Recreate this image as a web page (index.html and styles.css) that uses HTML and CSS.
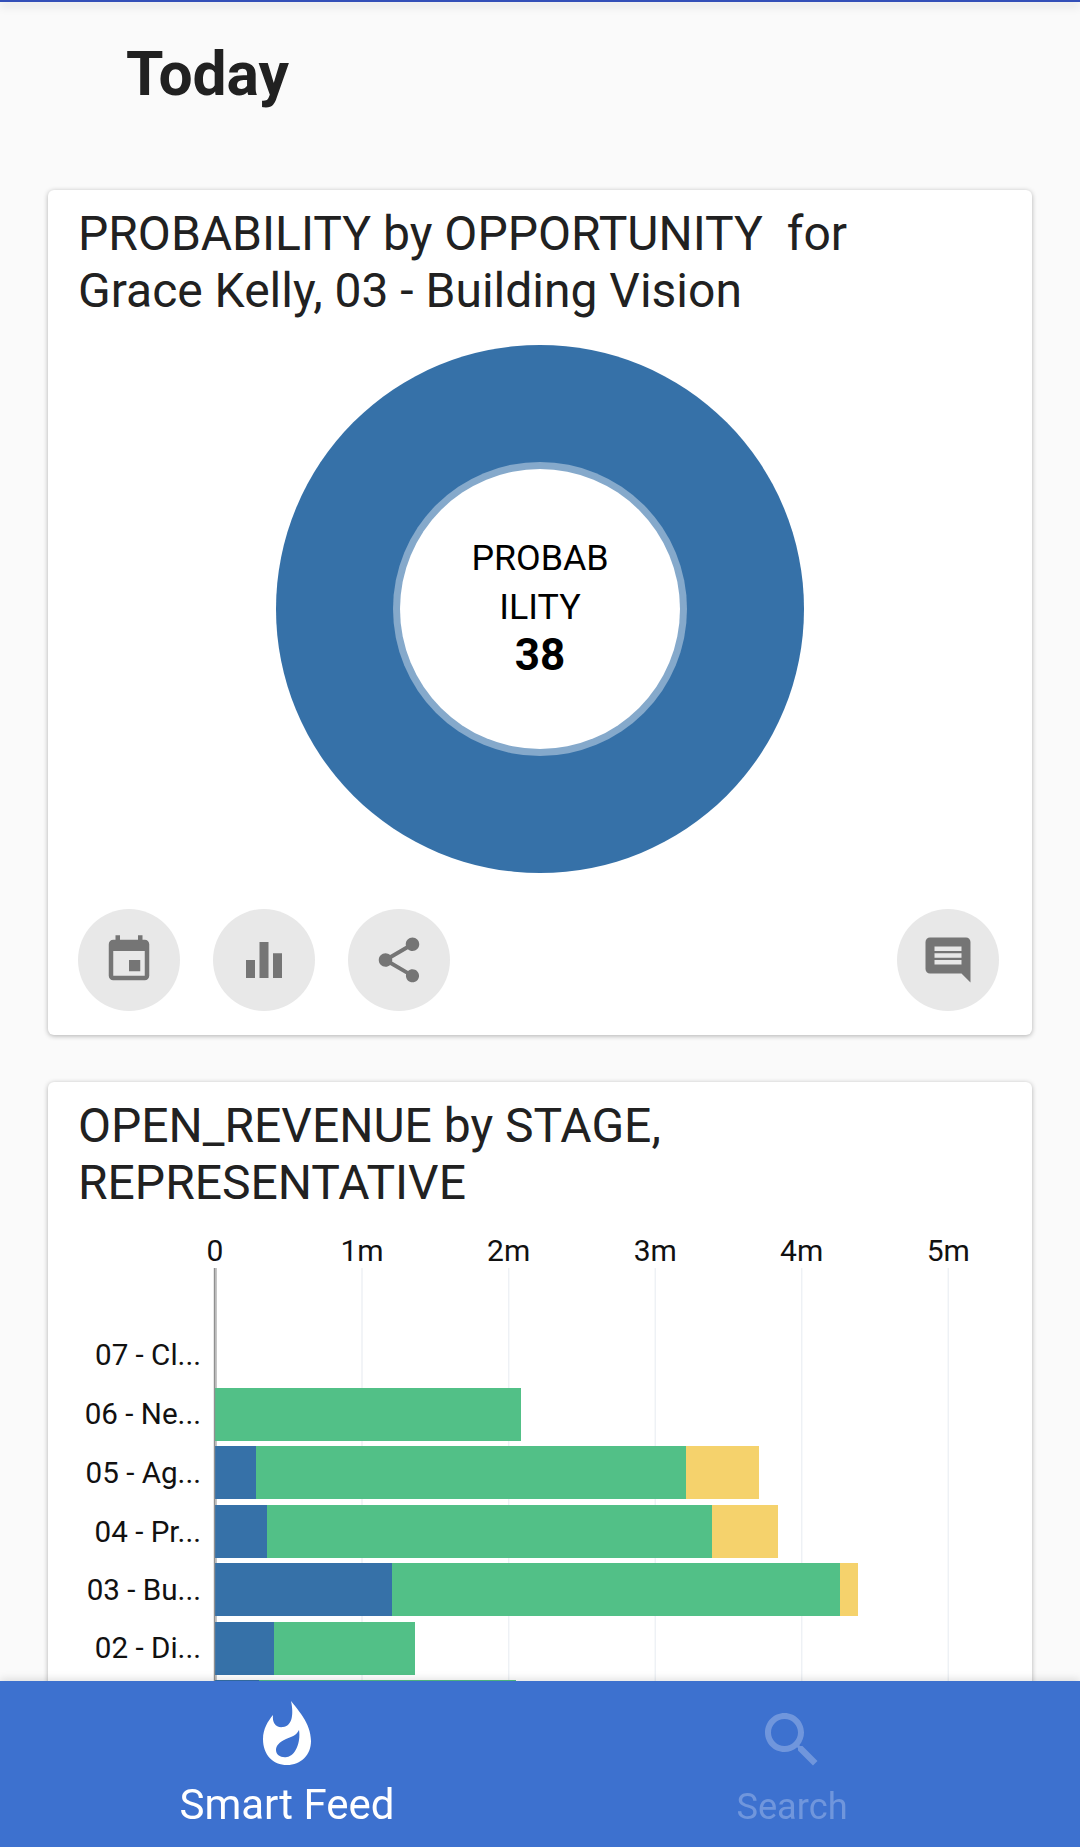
FILE: index.html
```html
<!DOCTYPE html>
<html lang="en">
<head>
    <meta charset="UTF-8">
    <meta name="viewport" content="width=device-width, initial-scale=1.0">
    <title>Smart Feed</title>
    <link rel="stylesheet" href="styles.css">
</head>
<body>
    <div class="top-bar"></div>
    <h1 class="page-title">Today</h1>

    <div class="card">
        <h2 class="card-title">PROBABILITY by OPPORTUNITY &nbsp;for Grace Kelly, 03 - Building Vision</h2>
        <svg class="donut" viewBox="0 0 528 528" width="528" height="528">
            <circle class="donut-slice" cx="264" cy="264" r="264"></circle>
            <circle class="donut-ring" cx="264" cy="264" r="147"></circle>
            <circle class="donut-hole" cx="264" cy="264" r="140"></circle>
            <text class="donut-label" x="264" y="225">PROBAB</text>
            <text class="donut-label" x="264" y="274">ILITY</text>
            <text class="donut-value" x="264" y="325">38</text>
        </svg>
        <div class="card-actions">
            <div class="action-group">
                <div class="action">
                    <svg viewBox="0 0 24 24" width="54" height="54"><path d="M17 12h-5v5h5v-5zM16 1v2H8V1H6v2H5c-1.11 0-1.99.9-1.99 2L3 19c0 1.1.89 2 2 2h14c1.1 0 2-.9 2-2V5c0-1.1-.9-2-2-2h-1V1h-2zm3 18H5V8h14v11z"/></svg>
                </div>
                <div class="action">
                    <svg viewBox="0 0 24 24" width="54" height="54"><path d="M4 12h4v8H4zM10 4h4v16h-4zM16 9h4v11h-4z"/></svg>
                </div>
                <div class="action">
                    <svg viewBox="0 0 24 24" width="54" height="54"><path d="M18 16.08c-.76 0-1.44.3-1.96.77L8.91 12.7c.05-.23.09-.46.09-.7s-.04-.47-.09-.7l7.05-4.11c.54.5 1.25.81 2.04.81 1.66 0 3-1.34 3-3s-1.34-3-3-3-3 1.34-3 3c0 .24.04.47.09.7L8.04 9.81C7.5 9.31 6.79 9 6 9c-1.66 0-3 1.34-3 3s1.34 3 3 3c.79 0 1.5-.31 2.04-.81l7.12 4.16c-.05.21-.08.43-.08.65 0 1.61 1.31 2.92 2.92 2.92 1.61 0 2.92-1.31 2.92-2.92s-1.31-2.92-2.92-2.92z"/></svg>
                </div>
            </div>
            <div class="action">
                <svg viewBox="0 0 24 24" width="54" height="54"><path d="M21.99 4c0-1.1-.89-2-1.99-2H4c-1.1 0-2 .9-2 2v12c0 1.1.9 2 2 2h14l4 4-.01-18zM18 14H6v-2h12v2zm0-3H6V9h12v2zm0-3H6V6h12v2z"/></svg>
            </div>
        </div>
    </div>

    <div class="card">
        <h2 class="card-title">OPEN_REVENUE by STAGE, REPRESENTATIVE</h2>
        <svg class="bar-chart" viewBox="1 0 984 530" width="984" height="530">
            <line class="grid" x1="315" x2="315" y1="56" y2="530"></line>
            <line class="grid" x1="461.7" x2="461.7" y1="56" y2="530"></line>
            <line class="grid" x1="608.3" x2="608.3" y1="56" y2="530"></line>
            <line class="grid" x1="754.7" x2="754.7" y1="56" y2="530"></line>
            <line class="grid" x1="901.3" x2="901.3" y1="56" y2="530"></line>
            <line class="grid-zero" x1="169" x2="169" y1="56" y2="530"></line>

            <text class="tick" x="168" y="49">0</text>
            <text class="tick" x="315" y="49">1m</text>
            <text class="tick" x="461.7" y="49">2m</text>
            <text class="tick" x="608.3" y="49">3m</text>
            <text class="tick" x="754.7" y="49">4m</text>
            <text class="tick" x="901.3" y="49">5m</text>

            <text class="stage" x="154" y="153">07 - Cl...</text>
            <text class="stage" x="154" y="212">06 - Ne...</text>
            <text class="stage" x="154" y="271">05 - Ag...</text>
            <text class="stage" x="154" y="330">04 - Pr...</text>
            <text class="stage" x="154" y="388">03 - Bu...</text>
            <text class="stage" x="154" y="446">02 - Di...</text>

            <rect class="bar-green" x="168" y="176" width="306" height="53"></rect>

            <rect class="bar-blue" x="168" y="234" width="41" height="53"></rect>
            <rect class="bar-green" x="209" y="234" width="430" height="53"></rect>
            <rect class="bar-yellow" x="639" y="234" width="73" height="53"></rect>

            <rect class="bar-blue" x="168" y="293" width="52" height="53"></rect>
            <rect class="bar-green" x="220" y="293" width="445" height="53"></rect>
            <rect class="bar-yellow" x="665" y="293" width="66" height="53"></rect>

            <rect class="bar-blue" x="168" y="351" width="177" height="53"></rect>
            <rect class="bar-green" x="345" y="351" width="448" height="53"></rect>
            <rect class="bar-yellow" x="793" y="351" width="18" height="53"></rect>

            <rect class="bar-blue" x="168" y="410" width="59" height="53"></rect>
            <rect class="bar-green" x="227" y="410" width="141" height="53"></rect>

            <rect class="bar-blue" x="168" y="468" width="44" height="53"></rect>
            <rect class="bar-green" x="212" y="468" width="257" height="53"></rect>

            <line class="axis" x1="167.5" x2="167.5" y1="56" y2="530"></line>
        </svg>
    </div>

    <nav class="bottom-nav">
        <div class="nav-item active">
            <svg class="nav-flame" viewBox="0 0 48 64" width="48" height="64">
                <path fill-rule="evenodd" d="M28 0C34 8 48 22 48 40C48 54 38 64 24 64C10 64 0 54 0 38C0 28 5 20 10 14C9 22 13 27 20 26C29 25 31 14 28 0ZM36 29C33 35 28 36 23 38C16 41 13 45 13 49C13 54 18 57 24 56C32 55 38 42 36 29Z"/>
            </svg>
            <span class="nav-label">Smart Feed</span>
        </div>
        <div class="nav-item">
            <svg class="nav-search" viewBox="0 0 24 24" width="72" height="72">
                <path d="M15.5 14h-.79l-.28-.27C15.41 12.59 16 11.11 16 9.5 16 5.91 13.09 3 9.5 3S3 5.91 3 9.5 5.91 16 9.5 16c1.61 0 3.09-.59 4.23-1.57l.27.28v.79l5 4.99L20.49 19l-4.99-5zm-6 0C7.01 14 5 11.99 5 9.5S7.01 5 9.5 5 14 7.01 14 9.5 11.99 14 9.5 14z"/>
            </svg>
            <span class="nav-label">Search</span>
        </div>
    </nav>
</body>
</html>
```

FILE: styles.css
```css
html, body {
    height: 100%;
}
body {
    font-family: Roboto, "Liberation Sans", sans-serif;
    margin: 0;
    background-color: #fafafa;
    color: #212121;
    overflow: hidden;
}
.top-bar {
    height: 2px;
    background-color: #3450b8;
    box-shadow: 0 3px 10px rgba(0, 0, 0, 0.25);
}
.page-title {
    margin: 0;
    padding: 38px 0 0 126px;
    height: 188px;
    box-sizing: border-box;
    font-size: 60.5px;
    line-height: 70px;
    font-weight: 700;
}
.card {
    margin: 0 48px 47px;
    background: #fff;
    border-radius: 6px;
    box-shadow: 0 1px 5px rgba(0, 0, 0, 0.3);
}
.card-title {
    margin: 0;
    padding: 15px 100px 0 30px;
    font-size: 48px;
    line-height: 57px;
    font-weight: 400;
}
.donut {
    display: block;
    margin: 26px auto 0;
}
.donut-slice {
    fill: #3671a8;
}
.donut-ring {
    fill: #85a9cb;
}
.donut-hole {
    fill: #fff;
}
.donut-label {
    font-size: 35.8px;
    text-anchor: middle;
    fill: #000;
}
.donut-value {
    font-size: 44px;
    font-weight: 700;
    text-anchor: middle;
    fill: #000;
}
.card-actions {
    display: flex;
    justify-content: space-between;
    padding: 36px 33px 24px 30px;
}
.action-group {
    display: flex;
    gap: 33px;
}
.action {
    width: 102px;
    height: 102px;
    border-radius: 50%;
    background-color: #e8e8e8;
    display: flex;
    align-items: center;
    justify-content: center;
}
.action svg {
    fill: #757575;
}
.bar-chart {
    display: block;
    margin-top: 1px;
}
.grid {
    stroke: #eef1f5;
    stroke-width: 1.5;
}
.grid-zero {
    stroke: #a0a0a0;
    stroke-width: 1.2;
}
.axis {
    stroke: #909090;
    stroke-width: 1.4;
}
.tick {
    font-size: 30px;
    text-anchor: middle;
    fill: #111;
}
.stage {
    font-size: 29.6px;
    text-anchor: end;
    fill: #111;
}
.bar-blue {
    fill: #3671a8;
}
.bar-green {
    fill: #52c087;
}
.bar-yellow {
    fill: #f5d26c;
}
.bottom-nav {
    position: fixed;
    left: 0;
    right: 0;
    bottom: 0;
    height: 166px;
    display: grid;
    grid-template-columns: 574px 436px;
    background-color: #3d71cf;
    box-shadow: 0 -2px 8px rgba(0, 0, 0, 0.12);
}
.nav-item {
    display: flex;
    flex-direction: column;
    align-items: center;
    color: #7096dc;
    fill: #7096dc;
}
.nav-item.active {
    color: #fff;
    fill: #fff;
}
.nav-flame {
    margin: 20px 0 16px;
}
.nav-search {
    margin: 23px 0 7px;
}
.nav-label {
    font-size: 36.2px;
    line-height: 48px;
}
.active .nav-label {
    font-size: 42px;
}
```
